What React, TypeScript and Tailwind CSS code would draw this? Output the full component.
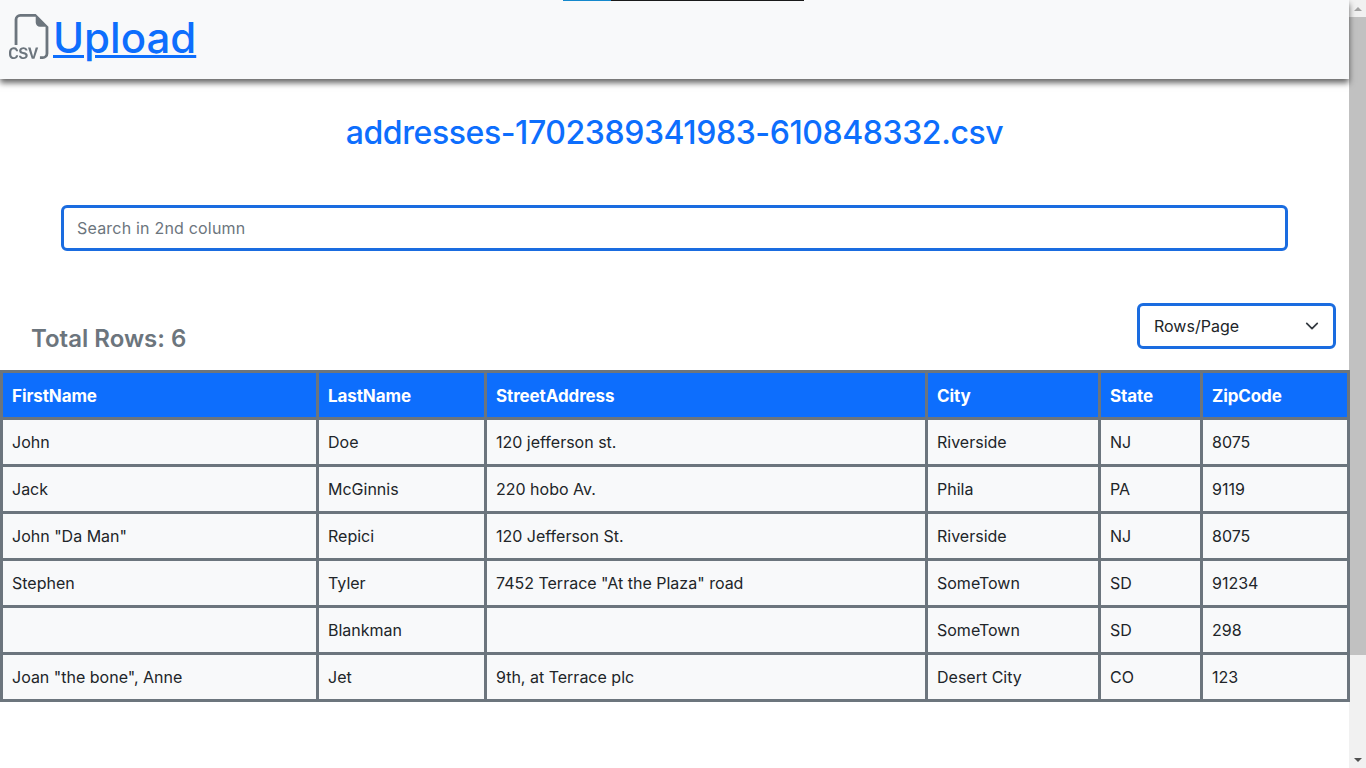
import { BsFiletypeCsv } from "react-icons/bs";

const columns = ["FirstName", "LastName", "StreetAddress", "City", "State", "ZipCode"];
const rows = [
  ["John", "Doe", "120 jefferson st.", "Riverside", "NJ", "8075"],
  ["Jack", "McGinnis", "220 hobo Av.", "Phila", "PA", "9119"],
  ['John "Da Man"', "Repici", "120 Jefferson St.", "Riverside", "NJ", "8075"],
  ["Stephen", "Tyler", '7452 Terrace "At the Plaza" road', "SomeTown", "SD", "91234"],
  ["", "Blankman", "", "SomeTown", "SD", "298"],
  ['Joan "the bone", Anne', "Jet", "9th, at Terrace plc", "Desert City", "CO", "123"],
];

export default function App() {
  return (
    <div className="flex h-screen w-full overflow-hidden bg-white font-['Inter',sans-serif] text-[#212529]">
      <div className="relative w-[1349px] shrink-0">
        <div className="absolute left-[563px] top-0 flex h-px w-[241px] bg-[#1a1a1a]">
          <div className="h-px w-[48px] bg-[#1488cc]" />
        </div>
        <header className="flex h-[79px] items-start bg-[#f8f9fa] pl-[9px] pt-[14px] shadow-[0_4px_6px_rgba(0,0,0,0.6)]">
          <BsFiletypeCsv className="h-[45px] w-[45px] text-[#6c757d]" />
          <a href="#" className="-ml-px text-[42px] font-medium leading-[48px] text-[#0d6efd] underline decoration-[3px]">
            Upload
          </a>
        </header>
        <h2 className="mt-[33px] text-center text-[32px] font-medium leading-[42px] tracking-[-0.42px] text-[#0d6efd]">
          addresses-1702389341983-610848332.csv
        </h2>
        <div className="ml-[61px] mt-[51px] flex h-[46px] w-[1227px] items-center rounded-[6px] border-[3px] border-[#1a6ce0] pl-[13px] text-[16px] tracking-[0.2px] text-[#6c757d]">
          Search in 2nd column
        </div>
        <div className="mt-[52px] flex h-[67px] items-start justify-between pl-[31px] pr-[13px]">
          <div className="mt-[20px] text-[24px] font-semibold leading-[32px] text-[#6c757d]">Total Rows: 6</div>
          <div className="flex h-[46px] w-[199px] items-center justify-between rounded-[6px] border-[3px] border-[#1a6ce0] pl-[14px] pr-[14px] text-[16px]">
            <span>Rows/Page</span>
            <svg viewBox="0 0 16 16" className="h-[14px] w-[14px]" fill="none" stroke="#343a40" strokeWidth="2" strokeLinecap="round" strokeLinejoin="round">
              <path d="m2 5 6 6 6-6" />
            </svg>
          </div>
        </div>
        <table className="w-[1347px] table-fixed border-collapse border-[3px] border-[#6c757d] text-[16px]">
          <colgroup>
            <col className="w-[316px]" />
            <col className="w-[168px]" />
            <col className="w-[441px]" />
            <col className="w-[173px]" />
            <col className="w-[102px]" />
            <col className="w-[147px]" />
          </colgroup>
          <thead>
            <tr className="h-[47px] bg-[#0d6efd] text-white">
              {columns.map((c) => (
                <th key={c} className="border-[3px] border-[#6c757d] px-[9px] pt-[3px] text-left text-[17px] font-bold tracking-[-0.1px]">{c}</th>
              ))}
            </tr>
          </thead>
          <tbody>
            {rows.map((r, i) => (
              <tr key={i} className="h-[47px] bg-[#f8f9fa]">
                {r.map((c, j) => (
                  <td key={j} className="border-[3px] border-[#6c757d] px-[9px]">{c}</td>
                ))}
              </tr>
            ))}
          </tbody>
        </table>
      </div>
      <div className="flex h-full w-[17px] shrink-0 flex-col items-center bg-[#f1f1f1]">
        <div className="flex h-[17px] items-center justify-center">
          <div className="h-0 w-0 border-x-[4px] border-b-[4px] border-x-transparent border-b-[#a3a3a3]" />
        </div>
        <div className="h-[638px] w-full bg-[#c1c1c1]" />
        <div className="mt-auto flex h-[17px] items-center justify-center">
          <div className="h-0 w-0 border-x-[4px] border-t-[4px] border-x-transparent border-t-[#505050]" />
        </div>
      </div>
    </div>
  );
}
